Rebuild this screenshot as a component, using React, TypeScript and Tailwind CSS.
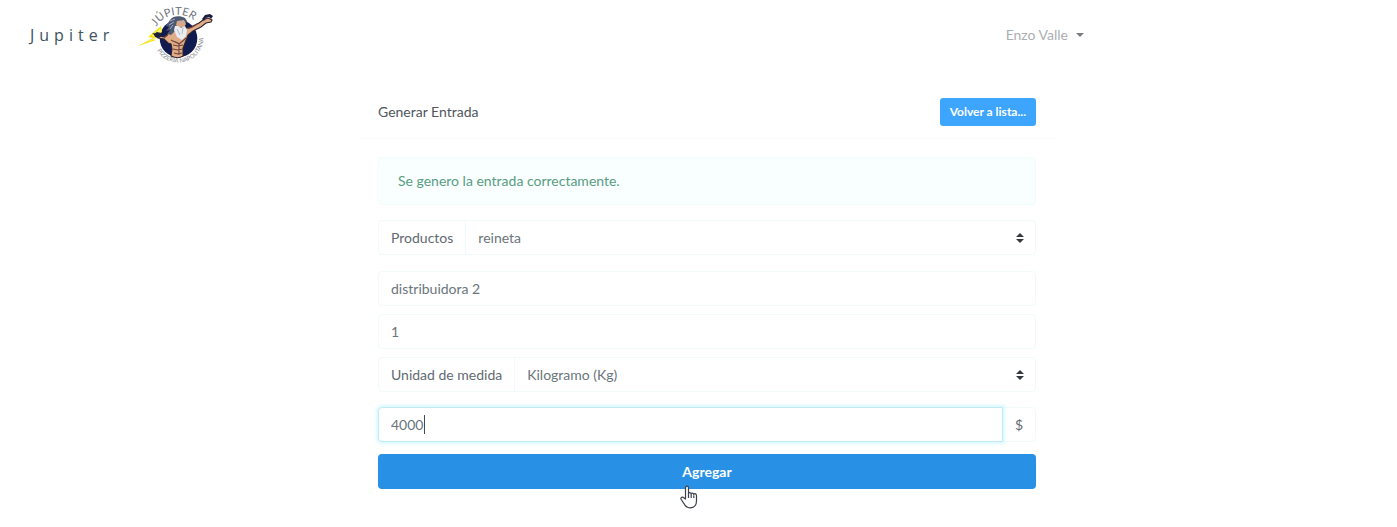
import React from "react";

const field =
  "h-[35px] w-full min-w-0 border border-[#f0fafb] bg-white px-3 text-sm text-[#6a757c] outline-none";
const addon =
  "flex h-[35px] shrink-0 items-center border border-[#f0fafb] bg-white px-3 text-sm text-[#5f6a72]";

function Logo() {
  return (
    <svg viewBox="0 0 90 70" className="h-[70px] w-[90px]" role="img" aria-label="Júpiter Pizzería Napolitana">
      <defs>
        <path id="arc-top" d="M26.500 26.500 A25 25 0 0 1 72 34" />
        <path id="arc-bottom" d="M27 50.500 A25 25 0 0 0 73 33" />
      </defs>
      <circle cx="48.500" cy="38.500" r="18.800" fill="#101b50" />
      <g transform="translate(0 -1)">
        <path d="M31 27 18 38l5 1L7 47.500l19-6.500-3-1 9-7Z" fill="#f7e414" />
        <path d="m30 30-8 7 4 1-9 5 10-4-3-2 8-5Z" fill="#fff683" />
        <path
          d="M24 35l4 4 6 1 4 4 3 1 1 5-1 7c4 2 9 2 12 0v-8l2-5 3-8 5-4 8-4 5-4 5-1 1-2-4-2-5 2-4 3-10 5-7 0-11 1-4 6-4 2-5-2Z"
          fill="#e0ac88"
          stroke="#30202a"
          strokeWidth="1.100"
        />
        <path d="m24 35 3-2 4 1 1 3-3 2-4-1Z" fill="#1b2040" />
        <path d="m72 20 3-4 5-1 3 2-2 3-2-2-3 1-2 3Z" fill="#1b2040" />
        <path
          d="M41 41c3 2 6 2 8 4m7-6c-2 2-4 4-7 6m-6 1 5 1 5-1m-10 4 5 1 5-1m-9 4 4 1 4-1M49 45v11M58 29c3 1 6-2 9-4M34 39c2-1 4-3 5-6"
          fill="none"
          stroke="#70453b"
          strokeWidth="1.100"
        />
        <path d="M40 21c2-4 10-5 15-2l2 3-2 5-3 5-7 0-4 4-3-1 2-4-4 1 3-4-3-1Z" fill="#4d5873" />
        <path d="m47 22 7-1 2 4-2 3-5 1-3-3Z" fill="#d9a783" />
        <path d="m45 27 3 0 3 2 4-2 2 4-1 6-4 4-5-3-3-7Z" fill="#e9edf1" />
        <path d="m40 22 5-2m-6 6 5-3m-4 7 3-4m4 4 3 6m3-7-1 6M49 23l2 1 3-1" fill="none" stroke="#a9b4c4" strokeWidth="0.900" />
      </g>
      <text className="font-['Lato',sans-serif] text-[11px]" fill="#707377">
        <textPath href="#arc-top">JÚPITER</textPath>
      </text>
      <text className="font-['Lato',sans-serif] text-[6px]" fill="#85878b">
        <textPath href="#arc-bottom">PIZZERÍA NAPOLITANA</textPath>
      </text>
    </svg>
  );
}

function SortArrows() {
  return (
    <svg viewBox="0 0 8 10" className="pointer-events-none absolute right-3 top-[13px] h-[10px] w-2" aria-hidden="true">
      <path d="M4 0 8 4H0ZM0 6h8L4 10Z" fill="#343a40" />
    </svg>
  );
}

function SelectRow({ id, label, value }: { id: string; label: string; value: string }) {
  return (
    <div className="flex">
      <label htmlFor={id} className={`${addon} rounded-l`}>
        {label}
      </label>
      <div className="relative -ml-px min-w-0 grow">
        <select id={id} defaultValue={value} className={`${field} appearance-none rounded-r`}>
          <option>{value}</option>
        </select>
        <SortArrows />
      </div>
    </div>
  );
}

function HandCursor() {
  return (
    <svg viewBox="0 0 18 24" className="pointer-events-none absolute left-[302px] top-[31px] h-6 w-[18px]" aria-hidden="true">
      <path
        d="M5.500 14V3c0-2.500 3-2.500 3 0v6c0-2 2.700-1.800 2.700.3 0-1.800 2.600-1.600 2.600.5 0-1.800 2.700-1.500 2.700 1v5c0 4-2 7-6.500 7-3.500 0-5-2-6.200-4.500L1.200 14.500c-1-2 1.300-3.200 2.600-1.700Z"
        fill="#fff"
        stroke="#3c4048"
        strokeWidth="1.200"
        strokeLinejoin="round"
      />
      <path d="M8.500 9v4M11.200 9.500V13M13.800 10.500V13" stroke="#3c4048" strokeWidth="1.200" />
    </svg>
  );
}

export default function App() {
  return (
    <div className="min-h-screen bg-white font-['Lato',sans-serif] text-sm text-[#50565c]">
      <header className="flex h-[70px] items-center justify-between pl-[30px] pr-[313px]">
        <div className="flex items-center gap-4">
          <a href="#" className="font-['Open_Sans',sans-serif] text-base tracking-[5px] text-[#3e5360]">
            Jupiter
          </a>
          <Logo />
        </div>
        <button type="button" className="flex items-center gap-2 text-[#acafb2]">
          Enzo Valle
          <svg viewBox="0 0 8 4" className="h-1 w-2" aria-hidden="true">
            <path d="M0 0h8L4 4Z" fill="#777b80" />
          </svg>
        </button>
      </header>

      <main className="pl-[17px] pt-7">
        <div className="mx-auto max-w-[658px]">
          <div className="flex h-7 items-center justify-between">
            <h1>Generar Entrada</h1>
            <a
              href="#"
              className="flex h-7 items-center rounded-[3px] bg-[#3ea5ff] px-2.5 text-xs font-bold text-white"
            >
              Volver a lista...
            </a>
          </div>
          <div className="-mx-5 mt-3 border-t border-[#fcfcfc]" />
          <div role="alert" className="mt-[18px] flex h-12 items-center rounded border border-[#effdfb] bg-[#f8fffe] px-[19px] text-[#5a9c82]">
            Se genero la entrada correctamente.
          </div>
          <form className="mt-[15px]" onSubmit={(e) => e.preventDefault()}>
            <SelectRow id="producto" label="Productos" value="reineta" />
            <div className="mb-[15px] mt-4 flex flex-col gap-2">
              <input aria-label="Proveedor" defaultValue="distribuidora 2" className={`${field} rounded`} />
              <input aria-label="Cantidad" defaultValue="1" className={`${field} rounded`} />
              <SelectRow id="unidad" label="Unidad de medida" value="Kilogramo (Kg)" />
            </div>
            <div className="flex">
              <div className="relative z-10 min-w-0 grow">
                <input
                  aria-label="Precio"
                  defaultValue="4000"
                  className="h-[35px] w-full rounded-l border border-[#c3ecf2] bg-white px-3 text-sm text-[#6a757c] shadow-[0_0_3px_2px_#d9faff] outline-none"
                />
                <span className="absolute left-[46px] top-2 h-[19px] w-px bg-[#454b52]" aria-hidden="true" />
              </div>
              <span className={`${addon} -ml-px rounded-r`}>$</span>
            </div>
            <div className="relative mt-3">
              <button type="submit" className="h-[35px] w-full rounded bg-[#2891e5] font-bold text-white">
                Agregar
              </button>
              <HandCursor />
            </div>
          </form>
        </div>
      </main>
    </div>
  );
}
